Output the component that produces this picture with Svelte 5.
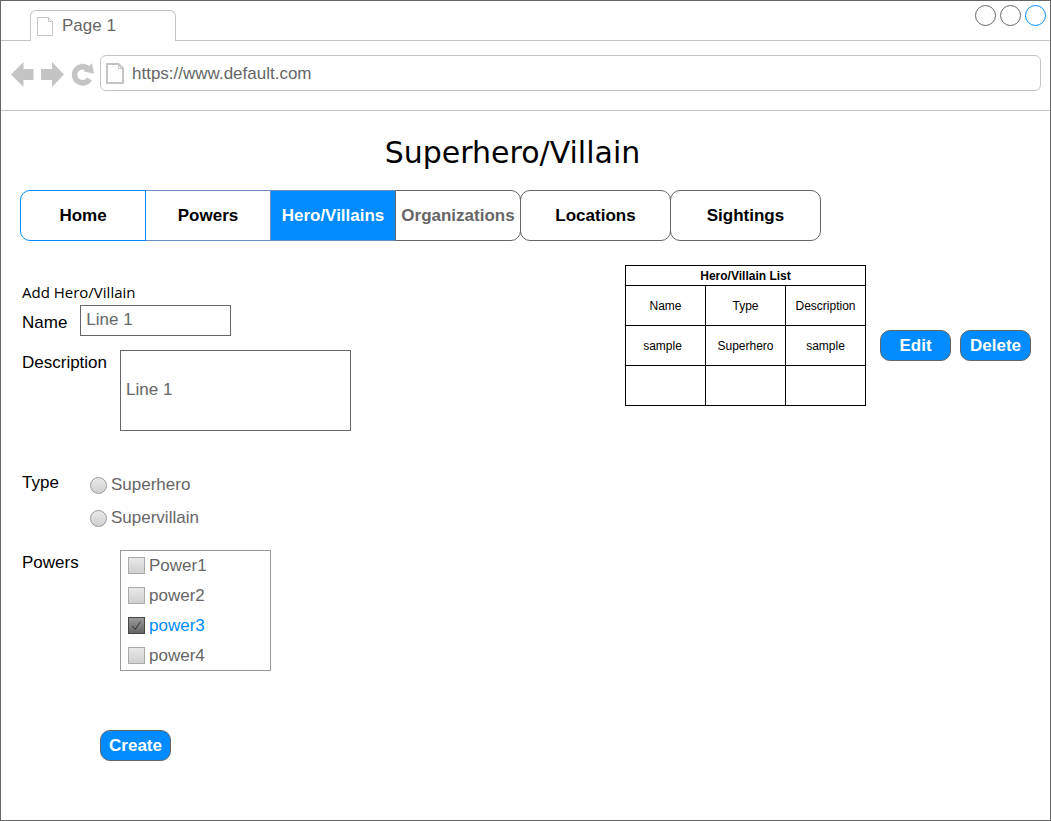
<script>
  const tabs = [
    { label: 'Home', kind: 'home' },
    { label: 'Powers', kind: 'powers' },
    { label: 'Hero/Villains', kind: 'active' },
    { label: 'Organizations', kind: 'orgs' },
    { label: 'Locations', kind: 'pill' },
    { label: 'Sightings', kind: 'pill' }
  ];
  let powers = $state([
    { label: 'Power1', on: false },
    { label: 'power2', on: false },
    { label: 'power3', on: true },
    { label: 'power4', on: false }
  ]);
  let type = $state('');
  const types = ['Superhero', 'Supervillain'];
  let name = $state('Line 1');
  let description = $state('Line 1');
  let address = $state('https://www.default.com');
</script>

<div class="window">
  <header class="tabstrip">
    <div class="page-tab">
      <svg width="16" height="19" viewBox="0 0 16 19" fill="none" stroke="#c4c4c4" aria-hidden="true">
        <path d="M.5.5h11l4 4v14H.5zM11.5.5v4h4" />
      </svg>
      <span>Page 1</span>
    </div>
    <div class="controls">
      <button aria-label="Minimize"></button>
      <button aria-label="Maximize"></button>
      <button class="close" aria-label="Close"></button>
    </div>
  </header>

  <div class="toolbar">
    <button class="icon" aria-label="Back">
      <svg width="23" height="25" viewBox="0 0 23 25" fill="#c4c4c4"><path d="M0 12.500 12.500 0v7H22.500v11H12.500v7z" /></svg>
    </button>
    <button class="icon" aria-label="Forward">
      <svg width="23" height="25" viewBox="0 0 23 25" fill="#c4c4c4"><path d="M23 12.500 11 0v7H0v11h11v7z" /></svg>
    </button>
    <button class="icon" aria-label="Reload">
      <svg width="22" height="23" viewBox="-1 0 22 23" overflow="visible">
        <path d="M17.600 16A8.100 8.100 0 1 1 16.300 5.900" fill="none" stroke="#c4c4c4" stroke-width="5.600" />
        <path d="M20.200.3 21.900 10.800 11.500 8.200z" fill="#c4c4c4" />
      </svg>
    </button>
    <label class="address">
      <svg width="18" height="21" viewBox="0 0 18 21" fill="none" stroke="#c4c4c4" aria-hidden="true">
        <path d="M1 1h11.500L17 5.500V20H1z" stroke-width="2" /><path d="M12.500 1v4.500H17" />
      </svg>
      <input aria-label="Address" bind:value={address} />
    </label>
  </div>

  <main>
    <h1>Superhero/Villain</h1>
    <nav>
      {#each tabs as tab}
        <a href="#{tab.label}" class={tab.kind}>{tab.label}</a>
      {/each}
    </nav>

    <div class="content">
      <form onsubmit={(e) => e.preventDefault()}>
        <h2>Add Hero/Villain</h2>
        <div class="row name">
          <label for="name">Name</label>
          <input id="name" bind:value={name} />
        </div>
        <div class="row description">
          <label for="description">Description</label>
          <textarea id="description" bind:value={description}></textarea>
        </div>
        <div class="row type" role="radiogroup" aria-labelledby="type-label">
          <span class="label" id="type-label">Type</span>
          <div class="radios">
            {#each types as t}
              <label class="option"><input type="radio" name="type" value={t} bind:group={type} />{t}</label>
            {/each}
          </div>
        </div>
        <div class="row powers-row" role="group" aria-labelledby="powers-label">
          <span class="label" id="powers-label">Powers</span>
          <div class="checks">
            {#each powers as p}
              <label class="option" class:on={p.on}>
                <span class="box">
                  <input type="checkbox" bind:checked={p.on} />
                  {#if p.on}
                    <svg width="17" height="17" viewBox="0 0 17 17" fill="none" stroke="#333" aria-hidden="true"><path d="M4.500 9 7 12.500 12.500 4.500" /></svg>
                  {/if}
                </span>{p.label}
              </label>
            {/each}
          </div>
        </div>
        <button class="action create">Create</button>
      </form>

      <section>
        <table>
          <thead>
            <tr class="title"><th colspan="3">Hero/Villain List</th></tr>
            <tr><th>Name</th><th>Type</th><th>Description</th></tr>
          </thead>
          <tbody>
            <tr><td class="first">sample</td><td>Superhero</td><td>sample</td></tr>
            <tr><td></td><td></td><td></td></tr>
          </tbody>
        </table>
        <div class="actions">
          <button class="action">Edit</button>
          <button class="action">Delete</button>
        </div>
      </section>
    </div>
  </main>
</div>

<style>
  :global(body) {
    margin: 0;
    background: #fff;
  }
  * {
    box-sizing: border-box;
  }
  .window {
    min-height: 100vh;
    border: 1px solid #666;
    font: 17px/20px "Liberation Sans", Arial, sans-serif;
    color: #000;
  }
  button,
  input,
  textarea {
    font: inherit;
    margin: 0;
  }
  svg {
    display: block;
    flex: none;
  }
  .tabstrip {
    display: flex;
    justify-content: space-between;
    height: 40px;
    padding: 0 4px 0 29px;
    border-bottom: 1px solid #c4c4c4;
  }
  .page-tab {
    display: flex;
    align-items: center;
    gap: 9px;
    width: 146px;
    height: 31px;
    margin-top: 9px;
    padding: 0 6px;
    border: 1px solid #c4c4c4;
    border-bottom: 0;
    border-radius: 6px 6px 0 0;
    background: #fff;
    color: #666;
  }
  .controls {
    display: flex;
    gap: 4px;
    padding-top: 4px;
  }
  .controls button {
    width: 21px;
    height: 21px;
    padding: 0;
    border: 1px solid #666;
    border-radius: 50%;
    background: none;
  }
  .controls .close {
    border-color: #008cff;
  }
  .toolbar {
    display: flex;
    align-items: center;
    height: 70px;
    gap: 7px;
    padding: 0 9px 5px 10px;
    border-bottom: 1px solid #c4c4c4;
  }
  .icon {
    padding: 3px 0 0;
    border: 0;
    background: none;
  }
  .address {
    display: flex;
    flex: 1;
    align-items: center;
    gap: 8px;
    height: 36px;
    padding: 1px 5px 0;
    border: 1px solid #c4c4c4;
    border-radius: 6px;
  }
  .address input {
    flex: 1;
    min-width: 0;
    padding: 0;
    border: 0;
    outline: 0;
    background: none;
    color: #666;
  }
  main {
    padding: 22px 19px 40px;
  }
  h1 {
    margin: 0 26px 17px 0;
    font: 30px/40px "DejaVu Sans", Verdana, sans-serif;
    text-align: center;
  }
  nav {
    display: flex;
    font-weight: bold;
  }
  nav a {
    flex: 0 1 126px;
    height: 51px;
    margin-right: -1px;
    border: 1px solid #666;
    line-height: 49px;
    text-align: center;
    color: #000;
    text-decoration: none;
    white-space: nowrap;
  }
  nav .home {
    z-index: 1;
    border-color: #008cff;
    border-radius: 10px 0 0 10px;
  }
  nav .powers {
    border-color: #6c8ebf;
  }
  nav .active {
    border-color: #6c8ebf;
    background: #008cff;
    color: #fff;
  }
  nav .orgs {
    border-radius: 0 10px 10px 0;
    color: #666;
  }
  nav .pill {
    flex-basis: 151px;
    border-radius: 10px;
  }
  .content {
    display: flex;
    justify-content: space-between;
    padding-top: 24px;
  }
  form {
    padding: 16px 0 0 2px;
  }
  h2 {
    margin: 0;
    font: 15px/22px "Open Sans", sans-serif;
  }
  .row {
    display: flex;
  }
  .row > label,
  .label {
    padding-top: 3px;
  }
  .name {
    gap: 13px;
    margin-top: 2px;
  }
  .name > label {
    padding-top: 8px;
  }
  .name input {
    width: 151px;
    height: 31px;
    padding: 0 5px 2px;
    border: 1px solid #666;
    color: #666;
  }
  .description {
    gap: 13px;
    margin-top: 14px;
  }
  textarea {
    width: 231px;
    height: 81px;
    padding: 29px 5px;
    border: 1px solid #666;
    resize: none;
    color: #666;
  }
  .type {
    margin-top: 39px;
  }
  .type .label {
    width: 68px;
  }
  .radios {
    display: grid;
    gap: 13px;
    padding-top: 5px;
  }
  .option {
    display: flex;
    align-items: center;
    gap: 4px;
    color: #666;
  }
  .option input {
    appearance: none;
    display: block;
    width: 17px;
    height: 17px;
    border: 1px solid #999;
    background: linear-gradient(#e8e8e8, #d0d0d0);
  }
  .option input[type='radio'] {
    border-radius: 50%;
  }
  .option input[type='checkbox'] {
    border-color: #aaa;
  }
  .option input[type='checkbox']:checked {
    border-color: #444;
    background: linear-gradient(#999, #666);
  }
  .box {
    display: grid;
  }
  .box > :global(*) {
    grid-area: 1 / 1;
  }
  .powers-row {
    margin-top: 22px;
  }
  .powers-row .label {
    width: 98px;
  }
  .checks {
    width: 151px;
    height: 121px;
    padding: 0 7px;
    border: 1px solid #999;
  }
  .checks .option {
    height: 30px;
    padding-bottom: 1px;
  }
  .on {
    color: #008cff;
  }
  .action {
    width: 71px;
    height: 31px;
    padding: 0;
    border: 1px solid #666;
    border-radius: 10px;
    background: #008cff;
    color: #fff;
    font-weight: bold;
  }
  .create {
    margin: 59px 0 0 78px;
  }
  section {
    display: flex;
    align-items: flex-start;
    gap: 14px;
  }
  table {
    width: 241px;
    table-layout: fixed;
    border-collapse: collapse;
    font-size: 12px;
    line-height: 16px;
    text-align: center;
  }
  th,
  td {
    height: 40px;
    padding: 0;
    border: 1px solid #000;
    font-weight: normal;
  }
  .title th {
    height: 20px;
    font-weight: bold;
  }
  .first {
    padding-right: 6px;
  }
  .actions {
    display: flex;
    gap: 9px;
    padding-top: 65px;
  }
</style>
